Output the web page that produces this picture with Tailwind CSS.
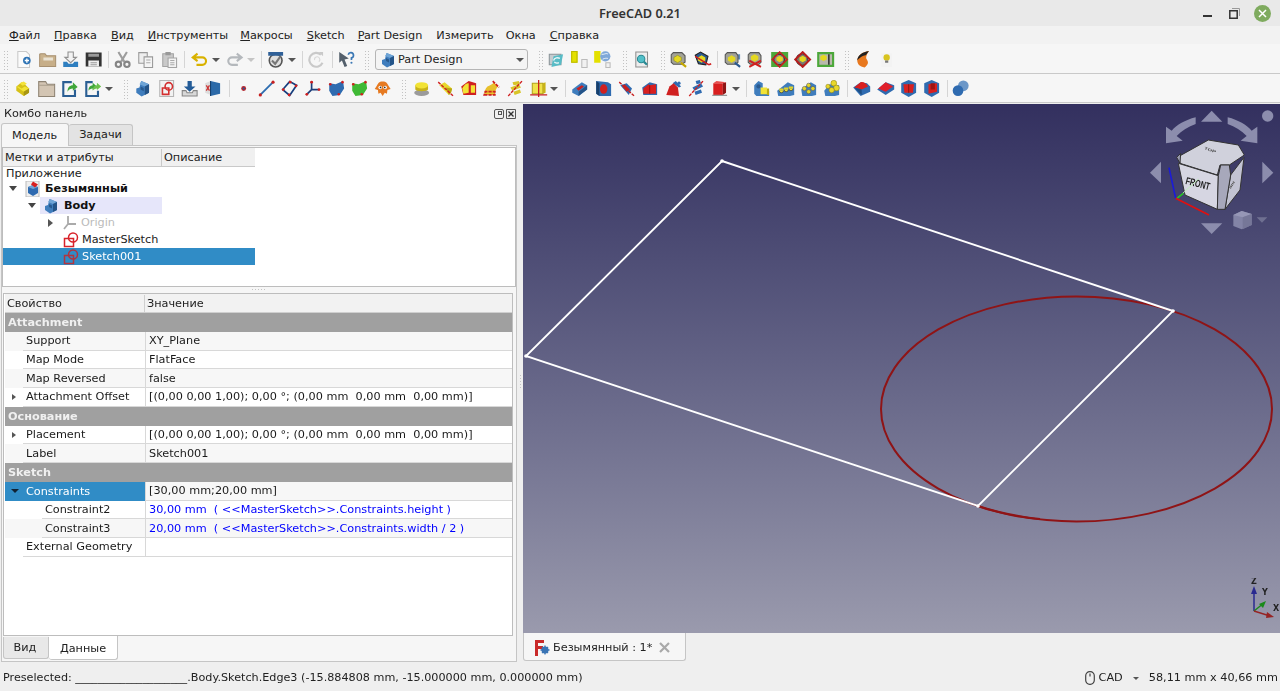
<!doctype html>
<html>
<head>
	<title>FreeCAD 0.21</title>
	<meta charset="UTF-8">
	<script src="https://cdn.jsdelivr.net/npm/@tailwindcss/browser@4"></script>
</head>

<body class="h-[691px] w-[1280px] overflow-hidden bg-[#efefef] font-['DejaVu_Sans',sans-serif] text-[11.25px] leading-none text-[#1a1a1a] blur-[0.3px]">

<!-- Icon set -->
<svg class="absolute size-0">
	<symbol id="new" viewBox="0 0 16 16"><path d="M2.5.5h8l3 3v12h-11z" fill="#fbfbfb" stroke="#c9c9c9"/><circle cx="11" cy="9" r="3.6" fill="#2f74b5"/><path d="M9 9h4M11 7v4" stroke="#fff" stroke-width="1.3"/></symbol>
	<symbol id="open" viewBox="0 0 16 16"><path d="M.5 3V14.500H15.500V4.500H7L5.500 2.500H1.500z" fill="#c9b28d" stroke="#a89070"/><path d="M4 6h9v4H4z" fill="#e9e2d3"/><path d="M1 9h14v5H1z" fill="#c7ae88"/></symbol>
	<symbol id="folder" viewBox="0 0 16 16"><path d="M.5 1.500H7L8.500 4H15.500V15.500H.500z" fill="#d3c5b3" stroke="#8f8474"/><path d="M1 5h14" stroke="#a99c8b"/></symbol>
	<symbol id="import" viewBox="0 0 16 16"><path d="M5.500 1h5v5h3L8 11 2.500 6h3z" fill="#f2f2f2" stroke="#8f8f8f"/><path d="M1 10h3.500l1.500 2h4l1.500-2H15v5H1z" fill="#2f7fc0"/></symbol>
	<symbol id="tray" viewBox="0 0 16 16"><path d="M1 10h3.500l1 2h5l1-2H15v5H1z" fill="#d8d8d8" stroke="#858585"/><path d="M6 1h4v5h3.500L8 11 2.500 6H6z" fill="#245c98"/></symbol>
	<symbol id="save" viewBox="0 0 16 16"><path d="M.5 1.500h15v13H.5z" fill="#333"/><path d="M3 2.500h10v3H3z" fill="#9a9a9a"/><path d="M3 9h10v5.500H3z" fill="#eee"/><path d="M5 11h6M5 13h6" stroke="#999"/></symbol>
	<symbol id="cut" viewBox="0 0 16 16"><path d="M4 1l5.500 9M12 1L6.500 10" stroke="#9d9d9d" stroke-width="2"/><circle cx="4" cy="12.500" r="2.500" fill="none" stroke="#858585" stroke-width="2"/><circle cx="12" cy="12.500" r="2.500" fill="none" stroke="#858585" stroke-width="2"/></symbol>
	<symbol id="copy" viewBox="0 0 16 16"><path d="M1.500 1.500h8v10h-8z" fill="#eee" stroke="#999"/><path d="M6.500 5.500h8v10h-8z" fill="#f4f4f4" stroke="#999"/><path d="M8.500 8.500h4M8.500 11h4" stroke="#aaa"/></symbol>
	<symbol id="paste" viewBox="0 0 16 16"><path d="M1.500 2.500h10v12h-10z" fill="#c9c9c9" stroke="#a3a3a3"/><path d="M4 1h5v3H4z" fill="#999"/><path d="M6.500 6.500h8v9h-8z" fill="#f2f2f2" stroke="#a3a3a3"/><path d="M8.500 9h4M8.500 11h4M8.500 13h4" stroke="#aaa"/></symbol>
	<symbol id="undo" viewBox="0 0 16 16"><path d="M6 2.500L1.500 6 6 9.500M2 6h8.500a3 3 0 0 1 0 7H5" fill="none" stroke="#d9b200" stroke-width="2"/></symbol>
	<symbol id="redo" viewBox="0 0 16 16"><path d="M10 2.500L14.500 6 10 9.500M14 6H5.500a3 3 0 0 0 0 7H11" fill="none" stroke="#b4b8bc" stroke-width="2"/></symbol>
	<symbol id="macro" viewBox="0 0 16 16"><circle cx="8" cy="9" r="6" fill="#dfdfdf" stroke="#555" stroke-width="1.500"/><path d="M1 1h14v3.500H1z" fill="#2f6098"/><path d="M4.500 9l3 3 5-7" fill="none" stroke="#777" stroke-width="2"/></symbol>
	<symbol id="refresh" viewBox="0 0 16 16"><path d="M13.500 11A6.500 6.500 0 1 1 12 3.500" fill="none" stroke="#c9c9c9" stroke-width="2"/><path d="M6 8.500a2.500 2.500 0 1 1 4 1.500" fill="none" stroke="#d9d9d9"/><path d="M10 1l4 0 0 4z" fill="#c9c9c9"/></symbol>
	<symbol id="what" viewBox="0 0 16 16"><path d="M1 1l9 6-4 1 2.500 6-2.500 1-2.500-6L1 11z" fill="#54606c"/><path d="M9.500 3.500a2.500 2.500 0 1 1 3 3v2" fill="none" stroke="#3b78b5" stroke-width="1.600"/><circle cx="12.500" cy="11" r="1" fill="#3b78b5"/></symbol>
	<symbol id="pdbody" viewBox="0 0 16 16"><path d="M6.500 1L14 4v8l-7 3.500L2 12V8l3-1z" fill="#3f7dbd"/><path d="M7 1l7 3-4 2-5-2z" fill="#6ea4d6"/><path d="M6 6l3 1.500v3L6 9z" fill="#27598e"/><path d="M10 6l4-2v8l-4 2z" fill="#245488"/></symbol>
	<symbol id="sketch" viewBox="0 0 16 16"><path d="M1.500.5h13v15h-13z" fill="#f2f2f2" stroke="#b5b5b5"/><circle cx="10" cy="6" r="3.500" fill="none" stroke="#d32f2f" stroke-width="1.500"/><path d="M4 7.500h6v6H4z" fill="none" stroke="#d32f2f" stroke-width="1.500"/></symbol>
	<symbol id="sk2" viewBox="0 0 16 16"><circle cx="10" cy="5.500" r="4.500" fill="none" stroke="currentColor" stroke-width="1.500"/><path d="M1.500 6.500h9v8h-9z" fill="none" stroke="currentColor" stroke-width="1.500"/></symbol>
	<symbol id="map" viewBox="0 0 16 16"><path d="M1 3l5-2v13l-5-2z" fill="#dcdcdc"/><path d="M6 1l9 2v10l-9 2z" fill="#2c6aa8"/><path d="M6 1v14" stroke="#173f6b"/><path d="M2 5l3 5M5 5l-3 5" stroke="#c33" stroke-width="1.200"/></symbol>
	<symbol id="point" viewBox="0 0 16 16"><circle cx="8" cy="8" r="2.300" fill="#b3262e"/><circle cx="8" cy="8" r="1" fill="#2558a0"/></symbol>
	<symbol id="line" viewBox="0 0 16 16"><path d="M2 14L14 2" stroke="#2d6db0" stroke-width="1.700"/><circle cx="2" cy="14" r="1.500" fill="#c82020"/><circle cx="14" cy="2" r="1.500" fill="#c82020"/></symbol>
	<symbol id="plane" viewBox="0 0 16 16"><path d="M8 1.500L14.500 5 8 14.500 1.500 9z" fill="none" stroke="#153e7e" stroke-width="1.600"/><g fill="#d21f1f"><circle cx="8.500" cy="2" r="1.300"/><circle cx="14" cy="5.500" r="1.300"/><circle cx="7.500" cy="14" r="1.300"/><circle cx="2" cy="9" r="1.300"/></g></symbol>
	<symbol id="axes" viewBox="0 0 16 16"><path d="M7 1v8M7 9l-5 5M7 9h7" stroke="#1e3f7a" stroke-width="1.600"/><g fill="#d21f1f"><circle cx="7" cy="2" r="1.300"/><circle cx="2.500" cy="13.500" r="1.300"/><circle cx="14" cy="9" r="1.300"/></g></symbol>
	<symbol id="binder" viewBox="0 0 16 16"><path d="M1 3l6 1 7-3 1 7-4 6-7 1-3-5z" fill="#2f6bb0"/><g fill="#d21f1f"><circle cx="2" cy="4" r="1.200"/><circle cx="13.500" cy="2" r="1.200"/><circle cx="10" cy="13.500" r="1.200"/></g></symbol>
	<symbol id="binderg" viewBox="0 0 16 16"><path d="M1 3l6 1 7-3 1 7-4 6-7 1-3-5z" fill="#3fb935"/><g fill="#d21f1f"><circle cx="2" cy="4" r="1.200"/><circle cx="13.500" cy="2" r="1.200"/><circle cx="10" cy="13.500" r="1.200"/></g></symbol>
	<symbol id="clone" viewBox="0 0 16 16"><path d="M8 1.500c3.500 0 4.500 2 5.500 4l2 3-3 1-.5 3.500-2-1-2 3-2-3-2 1-.5-3.500-3-1 2-3c1-2 2-4 5.500-4z" fill="#e67a22"/><circle cx="5.700" cy="7" r="1.700" fill="#fff"/><circle cx="10.300" cy="7" r="1.700" fill="#fff"/><circle cx="6" cy="7" r=".8" fill="#333"/><circle cx="10" cy="7" r=".8" fill="#333"/></symbol>
	<symbol id="part" viewBox="0 0 16 16"><path d="M2 6l5-4 3 2 4 4v4l-5 3-7-5z" fill="#d6c118"/><path d="M5 3l4-1.500 3 2-4 2z" fill="#f4e33a"/><path d="M2 6l7 5 5-3-4-2-3 2-3-2z" fill="#f2e335"/><path d="M9 11v4l5-3V8z" fill="#a89612"/></symbol>
	<symbol id="link1" viewBox="0 0 16 16"><path d="M10 2H2v13h11V9" fill="none" stroke="#2b5f94" stroke-width="2"/><path d="M6 11c0-4 2-6 5-6V2l4.500 4.500L11 10V8c-2 0-4 1-5 3z" fill="#3ea63a"/></symbol>
	<symbol id="link2" viewBox="0 0 16 16"><path d="M8 2H2v13h11V10" fill="none" stroke="#2b5f94" stroke-width="2"/><path d="M4 10c0-3 1.500-5 4-5V2.500L12 6 8 9.500V8c-2 0-3 1-4 2z" fill="#3ea63a"/><path d="M8 10c0-3 1.500-5 4-5V2.500L16 6l-4 3.500V8c-2 0-3 1-4 2z" fill="#6bc04b"/></symbol>
	<symbol id="sync" viewBox="0 0 16 16"><path d="M2 3h11v10H2z" fill="#c6ccd0" stroke="#8a9498"/><path d="M6 5l9-2-2 10-9 2z" fill="#58bcc6"/><path d="M6 9c1-3 4-3 6-2M11 11c-2 1-4 0-4-1" fill="none" stroke="#e8f6f8" stroke-width="1.300"/></symbol>
	<symbol id="ypage" viewBox="0 0 16 16"><path d="M0 0h6v11H0z" fill="#e4e000"/><path d="M.5.500h5v10h-5z" fill="none" stroke="#bbb800"/><path d="M10 8h5v7.500h-5z" fill="#f1f1f1" stroke="#bbb"/></symbol>
	<symbol id="yglobe" viewBox="0 0 16 16"><path d="M0 0h6v11H0z" fill="#e4e000"/><circle cx="10.500" cy="5" r="4.800" fill="#7fa8d8"/><path d="M7 3c2 1 4-2 6 0M8 8c1-2 4-1 5-1" stroke="#d8e6f4" fill="none"/><path d="M11 11h4v4.500h-4z" fill="#f1f1f1" stroke="#bbb"/></symbol>
	<symbol id="zoomdoc" viewBox="0 0 16 16"><path d="M2.500 1h11v14h-11z" fill="#ededed" stroke="#8f8f8f"/><circle cx="7.500" cy="7.500" r="3.500" fill="#52bfc8" stroke="#2a8a94"/><path d="M10 10l3 3" stroke="#2a8a94" stroke-width="2"/></symbol>
	<symbol id="ma" viewBox="0 0 16 16"><path d="M3 1.500h8l3 3v6l-3 2H3l-2-2v-7z" fill="#a3a397" stroke="#555"/><path d="M3.500 6L7 4l3.500 2v3L7 11 3.500 9z" fill="#e4d820" stroke="#8c8410" stroke-width=".5"/><path d="M10 11l5 4" stroke="#c4a800" stroke-width="2"/></symbol>
	<symbol id="mb" viewBox="0 0 16 16"><path d="M1 4l5-3 7 4-2 8-7-1z" fill="#2a5a90" stroke="#222"/><path d="M3.500 6L7 4l3.500 2v3L7 11 3.500 9z" fill="#e4d820"/><path d="M1 5l13 8M14 13l2-1" stroke="#d02020" stroke-width="1.500"/></symbol>
	<symbol id="mc" viewBox="0 0 16 16"><path d="M1 3h14v5H1z" fill="#5f8dbb"/><path d="M3 1.500h8l2 3v6l-2 2H3l-2-2v-7z" fill="#a3a397" stroke="#555"/><path d="M3.500 6L7 4l3.500 2v3L7 11 3.500 9z" fill="#e4d820"/><path d="M10 11l5 4" stroke="#2a5a90" stroke-width="2"/></symbol>
	<symbol id="md" viewBox="0 0 16 16"><path d="M3 1.500h8l2 3v6l-2 2H3l-2-2v-7z" fill="#a3a397" stroke="#555"/><path d="M3.500 5L7 3l3.500 2v3L7 10 3.500 8z" fill="#e4d820"/><path d="M2 9l11 6M13 9L2 15" stroke="#d02020" stroke-width="1.800"/></symbol>
	<symbol id="me" viewBox="0 0 16 16"><path d="M0 1h16v14H0z" fill="#4ca83a"/><circle cx="7.500" cy="8" r="5" fill="#888" stroke="#333"/><path d="M5 6l3-1.500L11 6v3L8 10.500 5 9z" fill="#e4d820"/><path d="M1 8l7-7 7 7-7 7z" fill="none" stroke="#c82020" stroke-width="1.500"/></symbol>
	<symbol id="mf" viewBox="0 0 16 16"><circle cx="7.500" cy="8" r="5.500" fill="#7a7a70" stroke="#333"/><path d="M5 6l3-1.500L11 6v3L8 10.500 5 9z" fill="#e4d820"/><path d="M1 8l7-7 7 7-7 7z" fill="none" stroke="#b81c1c" stroke-width="1.800"/></symbol>
	<symbol id="mg" viewBox="0 0 16 16"><path d="M0 1h16v14H0z" fill="#4ca83a"/><path d="M2 3h12v10H2z" fill="#b9b9ac"/><path d="M3 5l3-1.500L9 5v3L6 9.500 3 8z" fill="#e4d820"/><path d="M11 3v10" stroke="#333" stroke-width="1.500"/></symbol>
	<symbol id="orange" viewBox="1.500 0 13 16"><path d="M13 0C6 1 2 5 2 9c0 3 2 6 7 6.500C12 13 13 11 11 8 9.500 6 11 3 13 0z" fill="#e8781e"/><path d="M13 0C7 1 2 4 2 9c3-4 7-5 8-5z" fill="#222"/></symbol>
	<symbol id="bulb" viewBox="0 0 16 16"><path d="M3 2h10v13H3z" fill="#f3f3f3"/><circle cx="8" cy="6" r="3" fill="#d8c420"/><path d="M6.500 9h3v2h-3z" fill="#777"/></symbol>
	<symbol id="pad" viewBox="0 0 16 16"><ellipse cx="8" cy="12" rx="7" ry="3" fill="#9b9b9b"/><path d="M2 5v4c1 2 11 2 12 0V5z" fill="#c9b318"/><ellipse cx="8" cy="5" rx="6" ry="3" fill="#f2e335"/></symbol>
	<symbol id="rev" viewBox="0 0 16 16"><path d="M2 5l5-3 7 6-3 6z" fill="#e8d82c"/><path d="M14 8c0 3-2 6-3 6l-3-7z" fill="#b9a810"/><path d="M1 2l14 13" stroke="#d02020" stroke-width="1.300" stroke-dasharray="3 1"/></symbol>
	<symbol id="loft" viewBox="0 0 16 16"><path d="M1 6l7-5 7 2v11H3z" fill="#d02020"/><path d="M2 8c2-4 4-5 6-5v9l-5 1z" fill="#f2e335"/><path d="M10 5h4v7h-4z" fill="#f2e335"/></symbol>
	<symbol id="pipe" viewBox="0 0 16 16"><path d="M4 6c2-1 5-2 6-4l4 4c-2 2-3 5-3 8H1c0-3 1-6 3-8z" fill="#e8c02c"/><path d="M1 14h10V11H2zM9 1l6 6" stroke="#d02020" stroke-width="1.600" fill="none" stroke-dasharray="3 1"/></symbol>
	<symbol id="helix" viewBox="0 0 16 16"><path d="M3 7l8-3 2 3-8 3zM6 11l6-2 1 3-6 2zM5 2l6-1 1 3-6 1z" fill="#d8c428"/><path d="M1 15L14 1" stroke="#d02020" stroke-width="1.300" stroke-dasharray="3 1"/></symbol>
	<symbol id="ybox" viewBox="0 0 16 16"><path d="M2 3h10v10H2z" fill="#f0e24a" stroke="#b3a31a"/><path d="M12 3l2.500-1v10L12 13z" fill="#c9b318"/><path d="M8 0v16M0 14h16" stroke="#c62020" stroke-width="1.200"/></symbol>
	<symbol id="pocket" viewBox="0 0 16 16"><path d="M1 9l9-7 5 3v4l-8 6-6-3z" fill="#3f7dbd"/><path d="M5 8l5-3 2 1-5 4z" fill="#c82020"/><path d="M7 15V11l8-6v4z" fill="#245488"/></symbol>
	<symbol id="hole" viewBox="0 0 16 16"><path d="M1 1l11 1 3 2v11H4l-3-2z" fill="#2f6bb0"/><path d="M1 1l3 2v12l-3-2z" fill="#173f6b"/><ellipse cx="8" cy="8.500" rx="3.500" ry="4.500" fill="#d02020"/></symbol>
	<symbol id="groove" viewBox="0 0 16 16"><path d="M2 5l6-2 5 5-3 6z" fill="#2f6bb0"/><path d="M6 4l5 5-3 2-4-5z" fill="#c82020"/><path d="M1 2l14 13" stroke="#c82020" stroke-width="1.300" stroke-dasharray="3 1"/></symbol>
	<symbol id="sloft" viewBox="0 0 16 16"><path d="M1 7l7-5 7 2v10H2z" fill="#2f6bb0"/><path d="M2 8l5-4 1 1 6-1v9H2z" fill="#d81f1f"/><path d="M8 5v8" stroke="#a01010"/></symbol>
	<symbol id="spipe" viewBox="0 0 16 16"><path d="M7 3l3-2 5 5-2 1z" fill="#2f6bb0"/><path d="M1 14l3-8 4-3 4 4 1 8z" fill="#d02020"/><circle cx="13" cy="3" r="1.500" fill="#2f6bb0"/></symbol>
	<symbol id="shelix" viewBox="0 0 16 16"><path d="M4 7l8-4 2 3-8 4zM6 11l6-2 1 3-6 2z" fill="#2f6bb0"/><path d="M7 1l4-1 1 3-4 1z" fill="#2f6bb0"/><path d="M1 15L14 1" stroke="#d02020" stroke-width="1.300" stroke-dasharray="3 1"/></symbol>
	<symbol id="rbox" viewBox="0 0 16 16"><path d="M2 3h9v11H2z" fill="#d81f1f"/><path d="M11 3l3-1v10l-3 2z" fill="#8e1515"/><path d="M5 1l9 1-3 1H2z" fill="#e85050"/><path d="M1 14.500h14" stroke="#999" stroke-width="1.300"/></symbol>
	<symbol id="mirror" viewBox="0 0 16 16"><path d="M1 5l4-4 4 2v5l6 2v5H3l-2-2z" fill="#3f7dbd"/><circle cx="5" cy="6" r="2" fill="#2a5a90"/><path d="M7 7h6v6.500H7z" fill="#f2e335"/><path d="M14 8v6" stroke="#b9a810" stroke-width="2"/></symbol>
	<symbol id="linear" viewBox="0 0 16 16"><path d="M0 10l10-8 6 3v9l-4 1H1z" fill="#3f7dbd"/><path d="M2 10a2 2 0 0 0 4 0M6.500 9a2 2 0 0 0 4 0M11 8a2 2 0 0 0 4 0" fill="#f2e335" stroke="#333" stroke-width=".6"/><path d="M2 8h4v2H2zM6.500 7h4v2h-4zM11 6h4v2h-4z" fill="#e4d428"/></symbol>
	<symbol id="polar" viewBox="0 0 16 16"><path d="M1 9l9-7 5 3v9l-4 1H2z" fill="#3f7dbd"/><g fill="#e4d428" stroke="#555" stroke-width=".5"><circle cx="8" cy="5" r="2"/><circle cx="4" cy="8" r="2"/><circle cx="12" cy="8" r="2"/><circle cx="8" cy="11" r="2"/></g></symbol>
	<symbol id="multi" viewBox="0 0 16 16"><path d="M1 10l5-6 9 1v9l-4 1H2z" fill="#3f7dbd"/><g fill="#e8d82c" stroke="#8c7f10" stroke-width=".5"><circle cx="10" cy="3" r="2.700"/><circle cx="4.500" cy="6" r="2"/><circle cx="12.500" cy="7.500" r="2.700"/><circle cx="8" cy="9.500" r="2.500"/></g></symbol>
	<symbol id="fillet" viewBox="0 0 16 16"><path d="M0 7l7-5 6 1 3 3v5l-9 4z" fill="#2f6bb0"/><path d="M1 7l6-5c3-.5 5 1 7 4l-6 3z" fill="#d81f1f"/><path d="M1 7l7 2v5z" fill="#1d4f85"/></symbol>
	<symbol id="chamfer" viewBox="0 0 16 16"><path d="M0 9l8-7 8 3v4l-8 5z" fill="#2f6bb0"/><path d="M1 8l7-6 7 4-7 5z" fill="#e01f2a"/></symbol>
	<symbol id="draft" viewBox="0 0 16 16"><path d="M8 0l7 3v9l-7 4-7-4V3z" fill="#2f6bb0"/><path d="M3 4h10l-1 8H4z" fill="#d81f1f"/><path d="M8 4v8" stroke="#8e1515"/></symbol>
	<symbol id="thick" viewBox="0 0 16 16"><path d="M8 0l7 3v9l-7 4-7-4V3z" fill="#2f6bb0"/><path d="M5 4l8-1v8l-8 2z" fill="#d81f1f"/><path d="M7 3l4 0v6H7z" fill="#9d1414"/></symbol>
	<symbol id="bool" viewBox="0 0 16 16"><circle cx="10.500" cy="5.500" r="5" fill="#6b97c8"/><circle cx="5.500" cy="10" r="5" fill="#2f6bb0"/></symbol>
	<symbol id="pdoc" viewBox="0 0 16 16"><path d="M1 0h13v16H1z" fill="#eee" stroke="#bbb"/><path d="M8 4l5 2v6l-5 3-5-3V6z" fill="#2f6bb0"/><path d="M3 6l5 2 5-2-5-2z" fill="#6ea4d6"/><path d="M8 .500l5 3-3 3-4-3z" fill="#d81f1f"/></symbol>
	<symbol id="fc" viewBox="0 0 16 16"><path d="M1 0h9v3H4v3h5v3H4v7H1z" fill="#c92a2a"/><circle cx="11" cy="10" r="3.500" fill="#3a74b5"/><circle cx="11" cy="10" r="1.300" fill="#eee"/><path d="M11 5.500v9M6.500 10h9M8 7l6 6M14 7l-6 6" stroke="#3a74b5" stroke-width="1.300"/></symbol>
</svg>

<!-- Title bar -->
<div class="flex h-[26px] items-center bg-[#e9e9e9]">
	<span class="ml-[599px] font-['Noto_Sans',sans-serif] text-[12.75px] font-semibold text-[#333]">FreeCAD 0.21</span>
	<div class="ml-[522px] mt-[5px] h-[2px] w-[9px] bg-[#333]"></div>
	<svg class="ml-[17px] size-[11px]" viewBox="0 0 11 11"><path d="M3 .5h7.500V8" fill="none" stroke="#999"/><path d="M.8 2.800h7.400v7.400H.8z" fill="none" stroke="#333" stroke-width="1.500"/></svg>
	<div class="ml-[14px] flex size-[17px] items-center justify-center rounded-full bg-[#7fab5f]">
		<svg class="size-[9px]" viewBox="0 0 9 9"><path d="M1 1l7 7M8 1L1 8" stroke="#fff" stroke-width="1.500"/></svg>
	</div>
</div>

<!-- Menu -->
<div class="flex h-[18px] items-center bg-[#f2f2f2] pl-[9px] pt-px text-[#222]">
	<span><u>Ф</u>айл</span><span class="ml-[14px]"><u>П</u>равка</span><span class="ml-[14px]"><u>В</u>ид</span><span class="ml-[14px]"><u>И</u>нструменты</span><span class="ml-[12px]"><u>М</u>акросы</span><span class="ml-[14px]"><u>S</u>ketch</span><span class="ml-[13px]"><u>P</u>art Design</span><span class="ml-[14px]">Измерить</span><span class="ml-[12px]">Окна</span><span class="ml-[14px]"><u>С</u>правка</span>
</div>

<!-- Toolbar 1 -->
<div class="flex h-[30px] items-center border-b border-[#c9c9c9] bg-[#f6f6f6] pt-[2px]">
	<div class="ml-[3px] h-[20px] w-[6px] bg-[radial-gradient(#c2c2c2_1px,transparent_1px)] bg-[length:3px_3px]"></div>
	<svg class="ml-[3.33px] h-[17px] w-[23.33px] shrink-0"><use href="#new"/></svg>
	<svg class="h-[17px] w-[23.33px] shrink-0"><use href="#open"/></svg>
	<svg class="h-[17px] w-[23.33px] shrink-0"><use href="#import"/></svg>
	<svg class="h-[17px] w-[23.33px] shrink-0"><use href="#save"/></svg>
	<div class="ml-[2.33px] h-[17px] w-px bg-[#d5d5d5]"></div>
	<svg class="ml-[2px] h-[17px] w-[23.33px] shrink-0"><use href="#cut"/></svg>
	<svg class="h-[17px] w-[23.33px] shrink-0"><use href="#copy"/></svg>
	<svg class="h-[17px] w-[23.33px] shrink-0"><use href="#paste"/></svg>
	<div class="ml-[3.5px] h-[17px] w-px bg-[#d5d5d5]"></div>
	<svg class="ml-[2.8px] h-[17px] w-[23.33px] shrink-0"><use href="#undo"/></svg>
	<div class="flex w-[11.7px] justify-start"><div class="border-x-[4px] border-t-[4px] border-x-transparent border-t-[#555]"></div></div>
	<svg class="h-[17px] w-[23.33px] shrink-0"><use href="#redo"/></svg>
	<div class="flex w-[11.7px] justify-start"><div class="border-x-[4px] border-t-[4px] border-x-transparent border-t-[#c5c5c5]"></div></div>
	<div class="ml-[2.7px] h-[17px] w-px bg-[#d5d5d5]"></div>
	<svg class="ml-[2.5px] h-[17px] w-[23.33px] shrink-0"><use href="#macro"/></svg>
	<div class="flex w-[11.2px] justify-start"><div class="border-x-[4px] border-t-[4px] border-x-transparent border-t-[#555]"></div></div>
	<div class="ml-[3px] h-[17px] w-px bg-[#d5d5d5]"></div>
	<svg class="ml-[2.3px] h-[17px] w-[23.33px] shrink-0"><use href="#refresh"/></svg>
	<div class="ml-[3.4px] h-[17px] w-px bg-[#d5d5d5]"></div>
	<svg class="ml-[2.3px] h-[17px] w-[23.33px] shrink-0"><use href="#what"/></svg>
	<div class="ml-[5.4px] h-[20px] w-[6px] bg-[radial-gradient(#c2c2c2_1px,transparent_1px)] bg-[length:3px_3px]"></div>
	<div class="ml-[5px] flex h-[21px] w-[153px] shrink-0 items-center rounded-[3px] border border-[#b5b5b5] bg-[#f4f4f4] pl-[4px] text-[#222]">
		<svg class="mr-[2px] h-4 w-4"><use href="#pdbody"/></svg>
		<span class="pt-px">Part Design</span>
		<div class="ml-auto mr-[3px] border-x-[4px] border-t-[4px] border-x-transparent border-t-[#555]"></div>
	</div>
	<div class="ml-[10px] h-[20px] w-[6px] bg-[radial-gradient(#c2c2c2_1px,transparent_1px)] bg-[length:3px_3px]"></div>
	<svg class="ml-[.3px] h-[17px] w-[23.33px] shrink-0"><use href="#sync"/></svg>
	<svg class="h-[17px] w-[23.33px] shrink-0"><use href="#ypage"/></svg>
	<svg class="h-[17px] w-[23.33px] shrink-0"><use href="#yglobe"/></svg>
	<div class="ml-[7.7px] h-[20px] w-[6px] bg-[radial-gradient(#c2c2c2_1px,transparent_1px)] bg-[length:3px_3px]"></div>
	<svg class="ml-[2.3px] h-[17px] w-[23.33px] shrink-0"><use href="#zoomdoc"/></svg>
	<div class="ml-[6.4px] h-[20px] w-[6px] bg-[radial-gradient(#c2c2c2_1px,transparent_1px)] bg-[length:3px_3px]"></div>
	<svg class="ml-[1.3px] h-[17px] w-[23.33px] shrink-0"><use href="#ma"/></svg>
	<svg class="h-[17px] w-[23.33px] shrink-0"><use href="#mb"/></svg>
	<div class="ml-[3.5px] h-[17px] w-px bg-[#d5d5d5]"></div>
	<svg class="ml-[2.5px] h-[17px] w-[23.33px] shrink-0"><use href="#mc"/></svg>
	<svg class="h-[17px] w-[23.33px] shrink-0"><use href="#md"/></svg>
	<svg class="h-[17px] w-[23.33px] shrink-0"><use href="#me"/></svg>
	<svg class="h-[17px] w-[23.33px] shrink-0"><use href="#mf"/></svg>
	<svg class="h-[17px] w-[23.33px] shrink-0"><use href="#mg"/></svg>
	<div class="ml-[6.4px] h-[20px] w-[6px] bg-[radial-gradient(#c2c2c2_1px,transparent_1px)] bg-[length:3px_3px]"></div>
	<svg class="ml-[2px] h-[17px] w-[23.33px] shrink-0"><use href="#orange"/></svg>
	<svg class="h-[17px] w-[23.33px] shrink-0"><use href="#bulb"/></svg>
</div>

<!-- Toolbar 2 -->
<div class="flex h-[29px] items-center border-b border-[#c9c9c9] bg-[#f6f6f6] pt-px">
	<div class="ml-[3px] h-[20px] w-[6px] bg-[radial-gradient(#c2c2c2_1px,transparent_1px)] bg-[length:3px_3px]"></div>
	<svg class="ml-[2.3px] h-[17px] w-[23.33px] shrink-0"><use href="#part"/></svg>
	<svg class="h-[17px] w-[23.33px] shrink-0"><use href="#folder"/></svg>
	<svg class="h-[17px] w-[23.33px] shrink-0"><use href="#link1"/></svg>
	<svg class="h-[17px] w-[23.33px] shrink-0"><use href="#link2"/></svg>
	<div class="flex w-[11.4px] justify-start"><div class="border-x-[4px] border-t-[4px] border-x-transparent border-t-[#555]"></div></div>
	<div class="ml-[7px] h-[20px] w-[6px] bg-[radial-gradient(#c2c2c2_1px,transparent_1px)] bg-[length:3px_3px]"></div>
	<svg class="ml-[2.3px] h-[17px] w-[23.33px] shrink-0"><use href="#pdbody"/></svg>
	<svg class="h-[17px] w-[23.33px] shrink-0"><use href="#sketch"/></svg>
	<svg class="h-[17px] w-[23.33px] shrink-0"><use href="#tray"/></svg>
	<svg class="h-[17px] w-[23.33px] shrink-0"><use href="#map"/></svg>
	<div class="ml-[3.9px] h-[17px] w-px bg-[#d5d5d5]"></div>
	<svg class="ml-[2px] h-[17px] w-[23.33px] shrink-0"><use href="#point"/></svg>
	<svg class="h-[17px] w-[23.33px] shrink-0"><use href="#line"/></svg>
	<svg class="h-[17px] w-[23.33px] shrink-0"><use href="#plane"/></svg>
	<svg class="h-[17px] w-[23.33px] shrink-0"><use href="#axes"/></svg>
	<svg class="h-[17px] w-[23.33px] shrink-0"><use href="#binder"/></svg>
	<svg class="h-[17px] w-[23.33px] shrink-0"><use href="#binderg"/></svg>
	<svg class="h-[17px] w-[23.33px] shrink-0"><use href="#clone"/></svg>
	<div class="ml-[6.2px] h-[20px] w-[6px] bg-[radial-gradient(#c2c2c2_1px,transparent_1px)] bg-[length:3px_3px]"></div>
	<svg class="ml-[3.3px] h-[17px] w-[23.33px] shrink-0"><use href="#pad"/></svg>
	<svg class="h-[17px] w-[23.33px] shrink-0"><use href="#rev"/></svg>
	<svg class="h-[17px] w-[23.33px] shrink-0"><use href="#loft"/></svg>
	<svg class="h-[17px] w-[23.33px] shrink-0"><use href="#pipe"/></svg>
	<svg class="h-[17px] w-[23.33px] shrink-0"><use href="#helix"/></svg>
	<svg class="h-[17px] w-[23.33px] shrink-0"><use href="#ybox"/></svg>
	<div class="flex w-[11.7px] justify-start"><div class="border-x-[4px] border-t-[4px] border-x-transparent border-t-[#555]"></div></div>
	<div class="ml-[3px] h-[17px] w-px bg-[#d5d5d5]"></div>
	<svg class="ml-[2.3px] h-[17px] w-[23.33px] shrink-0"><use href="#pocket"/></svg>
	<svg class="h-[17px] w-[23.33px] shrink-0"><use href="#hole"/></svg>
	<svg class="h-[17px] w-[23.33px] shrink-0"><use href="#groove"/></svg>
	<svg class="h-[17px] w-[23.33px] shrink-0"><use href="#sloft"/></svg>
	<svg class="h-[17px] w-[23.33px] shrink-0"><use href="#spipe"/></svg>
	<svg class="h-[17px] w-[23.33px] shrink-0"><use href="#shelix"/></svg>
	<svg class="h-[17px] w-[23.33px] shrink-0"><use href="#rbox"/></svg>
	<div class="flex w-[11.7px] justify-start"><div class="border-x-[4px] border-t-[4px] border-x-transparent border-t-[#555]"></div></div>
	<div class="ml-[3.2px] h-[17px] w-px bg-[#d5d5d5]"></div>
	<svg class="ml-[3px] h-[17px] w-[23.33px] shrink-0"><use href="#mirror"/></svg>
	<svg class="h-[17px] w-[23.33px] shrink-0"><use href="#linear"/></svg>
	<svg class="h-[17px] w-[23.33px] shrink-0"><use href="#polar"/></svg>
	<svg class="h-[17px] w-[23.33px] shrink-0"><use href="#multi"/></svg>
	<div class="ml-[3.7px] h-[17px] w-px bg-[#d5d5d5]"></div>
	<svg class="ml-[2px] h-[17px] w-[23.33px] shrink-0"><use href="#fillet"/></svg>
	<svg class="h-[17px] w-[23.33px] shrink-0"><use href="#chamfer"/></svg>
	<svg class="h-[17px] w-[23.33px] shrink-0"><use href="#draft"/></svg>
	<svg class="h-[17px] w-[23.33px] shrink-0"><use href="#thick"/></svg>
	<div class="ml-[3.7px] h-[17px] w-px bg-[#d5d5d5]"></div>
	<svg class="ml-px h-[17px] w-[23.33px] shrink-0"><use href="#bool"/></svg>
</div>

<!-- Main area -->
<div class="flex h-[558px]">

	<!-- Combo panel -->
	<div class="flex w-[518px] shrink-0 flex-col pl-px">
		<div class="flex h-[19px] shrink-0 items-center pl-[3px] pt-[2px] text-[#222]">
			Комбо панель
			<div class="ml-auto mr-[2px] flex gap-[2px]">
				<div class="size-[10px] rounded-[2px] border border-[#555]"><div class="ml-[3px] mt-[1px] size-[4px] border border-[#555]"></div></div>
				<svg class="size-[10px]" viewBox="0 0 10 10"><path d="M.5.5h9v9h-9z" fill="none" stroke="#555"/><path d="M2.500 2.500l5 5M7.500 2.500l-5 5" stroke="#333" stroke-width="1.300"/></svg>
			</div>
		</div>
		<div class="flex h-[23px] shrink-0 items-end">
			<div class="relative z-10 -mb-px flex h-[23px] w-[68px] items-center justify-center rounded-t-[3px] border border-b-0 border-[#c5c5c5] bg-[#f6f6f6] pr-px pt-[2px] text-[#222]">Модель</div>
			<div class="flex h-[21px] w-[64px] items-center justify-center rounded-t-[3px] border border-b-0 border-l-0 border-[#c5c5c5] bg-[#e3e3e3] text-[#222]">Задачи</div>
		</div>
		<div class="flex h-[517px] w-[516px] shrink-0 flex-col border border-[#c5c5c5] bg-[#f6f6f6] px-[1px] pt-[1px]">

			<!-- Tree -->
			<div class="-mx-px h-[140px] shrink-0 border border-[#bdbdbd] bg-white">
				<div class="flex h-[19px] w-[252px] border-b border-[#c9c9c9] bg-[#f0f0f0] pt-px text-[#222]">
					<div class="flex w-[159px] items-center border-r border-[#c9c9c9] pl-[2px]">Метки и атрибуты</div>
					<div class="flex items-center pl-[2px]">Описание</div>
				</div>
				<div class="flex h-[13px] items-center pl-[3px] text-[#222]">Приложение</div>
				<div class="flex h-[17px] items-center pl-[6px] font-bold text-[#111]">
					<div class="border-x-[4px] border-t-[5px] border-x-transparent border-t-[#444]"></div>
					<svg class="ml-[8px] mr-[4px] size-4"><use href="#pdoc"/></svg>Безымянный
				</div>
				<div class="flex h-[17px] items-center pl-[25px] font-bold text-[#111]">
					<div class="border-x-[4px] border-t-[5px] border-x-transparent border-t-[#444]"></div>
					<div class="ml-[4px] flex h-[17px] w-[122px] items-center bg-[#e6e6fa] pl-[3px]"><svg class="mr-[5px] size-4"><use href="#pdbody"/></svg>Body</div>
				</div>
				<div class="flex h-[17px] items-center pl-[45px] text-[#bbb]">
					<div class="border-y-[4px] border-l-[5px] border-y-transparent border-l-[#555]"></div>
					<svg class="ml-[9px] mr-[3px] size-4" viewBox="0 0 16 16"><path d="M6 1v8M6 9l-4 5M6 9h8" stroke="#aaa" stroke-width="1.800" fill="none"/></svg>Origin
				</div>
				<div class="flex h-[17px] items-center pl-[60px] text-[#222]">
					<svg class="mr-[3px] size-4 text-[#d8232a]"><use href="#sk2"/></svg>MasterSketch
				</div>
				<div class="ml-0 flex h-[17px] w-[252px] items-center bg-[#308cc6] pl-[60px] text-white">
					<svg class="mr-[3px] size-4 text-[#b3343f]"><use href="#sk2"/></svg>Sketch001
				</div>
			</div>

			<!-- Splitter -->
			<div class="flex h-[6px] shrink-0 justify-center">
				<div class="mt-[1px] h-[3px] w-[16px] bg-[radial-gradient(#c4c4c4_1px,transparent_1px)] bg-[length:3px_3px]"></div>
			</div>

			<!-- Property editor -->
			<div class="mr-[2px] h-[343px] shrink-0 border border-[#bdbdbd] bg-white pl-px">
				<div class="flex h-[19px] border-b border-[#cfcfcf] bg-[#f2f2f2] pt-px text-[#222]">
					<div class="flex w-[140px] items-center border-r border-[#cfcfcf] pl-[2px]">Свойство</div>
					<div class="flex items-center pl-[2px]">Значение</div>
				</div>
				<div class="flex h-[18.75px] items-center bg-[#a0a0a0] pl-[3px] font-bold text-[#f0f0f0]">Attachment</div>

				<div class="flex h-[18.75px] bg-[#f7f7f7]">
					<div class="w-[18px] shrink-0"></div>
					<div class="flex w-[122px] items-center border-b border-[#d8d8d8] pl-[3px]">Support</div>
					<div class="flex flex-1 items-center border-b border-l border-[#d8d8d8] pl-[3px]">XY_Plane</div>
				</div>
				<div class="flex h-[18.75px]">
					<div class="w-[18px] shrink-0"></div>
					<div class="flex w-[122px] items-center border-b border-[#d8d8d8] pl-[3px]">Map Mode</div>
					<div class="flex flex-1 items-center border-b border-l border-[#d8d8d8] pl-[3px]">FlatFace</div>
				</div>
				<div class="flex h-[18.75px] bg-[#f7f7f7]">
					<div class="w-[18px] shrink-0"></div>
					<div class="flex w-[122px] items-center border-b border-[#d8d8d8] pl-[3px]">Map Reversed</div>
					<div class="flex flex-1 items-center border-b border-l border-[#d8d8d8] pl-[3px]">false</div>
				</div>
				<div class="flex h-[18.75px]">
					<div class="flex w-[18px] shrink-0 items-center pl-[7px]"><div class="border-y-[3.5px] border-l-[4px] border-y-transparent border-l-[#555]"></div></div>
					<div class="flex w-[122px] items-center whitespace-nowrap border-b border-[#d8d8d8] pl-[3px]">Attachment Offset</div>
					<div class="flex flex-1 items-center whitespace-pre border-b border-l border-[#d8d8d8] pl-[3px]">[(0,00 0,00 1,00); 0,00 °; (0,00 mm  0,00 mm  0,00 mm)]</div>
				</div>

				<div class="flex h-[18.75px] items-center bg-[#a0a0a0] pl-[3px] font-bold text-[#f0f0f0]">Основание</div>
				<div class="flex h-[18.75px]">
					<div class="flex w-[18px] shrink-0 items-center pl-[7px]"><div class="border-y-[3.5px] border-l-[4px] border-y-transparent border-l-[#555]"></div></div>
					<div class="flex w-[122px] items-center border-b border-[#d8d8d8] pl-[3px]">Placement</div>
					<div class="flex flex-1 items-center whitespace-pre border-b border-l border-[#d8d8d8] pl-[3px]">[(0,00 0,00 1,00); 0,00 °; (0,00 mm  0,00 mm  0,00 mm)]</div>
				</div>
				<div class="flex h-[18.75px] bg-[#f7f7f7]">
					<div class="w-[18px] shrink-0"></div>
					<div class="flex w-[122px] items-center border-b border-[#d8d8d8] pl-[3px]">Label</div>
					<div class="flex flex-1 items-center border-b border-l border-[#d8d8d8] pl-[3px]">Sketch001</div>
				</div>

				<div class="flex h-[18.75px] items-center bg-[#a0a0a0] pl-[3px] font-bold text-[#f0f0f0]">Sketch</div>
				<div class="flex h-[18.75px] bg-[#f7f7f7]">
					<div class="flex w-[18px] shrink-0 items-center bg-[#308cc6] pl-[6px]"><div class="border-x-[4px] border-t-[4px] border-x-transparent border-t-[#123]"></div></div>
					<div class="flex w-[122px] items-center bg-[#308cc6] pl-[3px] text-white">Constraints</div>
					<div class="flex flex-1 items-center border-b border-l border-[#d8d8d8] pl-[3px]">[30,00 mm;20,00 mm]</div>
				</div>
				<div class="flex h-[18.75px]">
					<div class="w-[37px] shrink-0"></div>
					<div class="flex w-[103px] items-center border-b border-[#d8d8d8] pl-[3px]">Constraint2</div>
					<div class="flex flex-1 items-center whitespace-pre border-b border-l border-[#d8d8d8] pl-[3px] text-[#0000ff]">30,00 mm  ( &lt;&lt;MasterSketch&gt;&gt;.Constraints.height )</div>
				</div>
				<div class="flex h-[18.75px] bg-[#f7f7f7]">
					<div class="w-[37px] shrink-0"></div>
					<div class="flex w-[103px] items-center border-b border-[#d8d8d8] pl-[3px]">Constraint3</div>
					<div class="flex flex-1 items-center whitespace-pre border-b border-l border-[#d8d8d8] pl-[3px] text-[#0000ff]">20,00 mm  ( &lt;&lt;MasterSketch&gt;&gt;.Constraints.width / 2 )</div>
				</div>
				<div class="flex h-[18.75px]">
					<div class="w-[18px] shrink-0"></div>
					<div class="flex w-[122px] items-center whitespace-nowrap border-b border-[#d8d8d8] pl-[3px]">External Geometry</div>
					<div class="flex flex-1 items-center border-b border-l border-[#d8d8d8]"></div>
				</div>
			</div>

			<!-- Bottom tabs -->
			<div class="-mx-px flex h-[24px] shrink-0 items-start pl-px">
				<div class="mt-px flex h-[22px] w-[46px] items-center justify-center rounded-b-[3px] border border-t-0 border-[#c5c5c5] bg-[#e8e8e8] pr-[2px] pt-px text-[#222]">Вид</div>
				<div class="flex h-[24px] w-[69px] items-center justify-center rounded-b-[3px] border border-t-0 border-l-0 border-[#c5c5c5] bg-white pt-[2px] text-[#222]">Данные</div>
			</div>
		</div>
	</div>

	<!-- Dock splitter -->
	<div class="flex w-[5px] shrink-0 items-center justify-center">
		<div class="h-[16px] w-[3px] bg-[radial-gradient(#c4c4c4_1px,transparent_1px)] bg-[length:3px_3px]"></div>
	</div>

	<!-- 3D view -->
	<div class="flex min-w-0 flex-1 flex-col pt-px">
		<div class="relative h-[529px] shrink-0 bg-gradient-to-b from-[#33305f] to-[#9a9aad]">
			<svg class="absolute inset-0 h-[529px] w-[757px]" viewBox="523 104 757 529">
				<ellipse cx="1076.500" cy="409" rx="195.500" ry="112.500" fill="none" stroke="#8f1416" stroke-width="2"/>
				<path d="M722 161L1173 311L978 506L526 356Z" fill="none" stroke="#fff" stroke-width="1.900"/>
				<path d="M978 506A195.500 112.500 0 0 0 1040 519" fill="none" stroke="#8f1416" stroke-width="2"/>
				<circle cx="722" cy="161" r="1.800" fill="#fff"/><circle cx="1173" cy="311" r="1.800" fill="#fff"/><circle cx="978" cy="506" r="1.800" fill="#fff"/><circle cx="526" cy="356" r="1.800" fill="#fff"/>
			</svg>

			<!-- Navigation cube -->
			<svg class="absolute right-0 top-0 h-[136px] w-[150px]" viewBox="0 12 450 408">
				<g fill="#8c8dad">
					<path d="M245 32L213 65H277Z"/><path d="M213 370H277L245 402Z"/><path d="M60 218L93 185V250Z"/><path d="M430 218L397 185V250Z"/>
					<circle cx="413" cy="48" r="17"/>
					<path d="M197 52C165 60 140 75 125 92L108 80V130L158 122L140 108C155 92 175 80 197 72Z"/>
					<path d="M293 52C325 60 350 75 365 92L382 80V130L332 122L350 108C335 92 315 80 293 72Z"/>
				</g>
				<path d="M310 345L335 333L365 342V375L335 388L310 378Z" fill="#8384a6"/>
				<path d="M310 345L335 333L365 342L338 352Z" fill="#9697b6"/>
				<path d="M338 352L365 342V375L338 388Z" fill="#767798"/>
				<path d="M380 352H412L396 368Z" fill="#6f7091"/>
				<g stroke="#333" stroke-width="3" stroke-linejoin="round">
					<path d="M145 170L235 120L325 135L343 165L298 195L270 195L262 225L150 190Z" fill="#d0d1dc"/>
					<path d="M145 190L265 227L262 328L165 285Z" fill="#d6d6e2"/>
					<path d="M302 225L342 172L330 270L285 328Z" fill="#c2c3d2"/>
					<path d="M265 227L272 195L298 195L302 225L285 328L262 328Z" fill="#a7a8bb"/>
					<path d="M140 172L152 160L150 190Z" fill="#999ab0"/>
				</g>
				<text x="0" y="0" transform="translate(165 252) rotate(14) scale(.8 1.150)" font-family="Liberation Sans" font-weight="700" font-size="27" fill="#222">FRONT</text>
				<text x="0" y="0" transform="translate(222 147) rotate(20) scale(1 .6)" font-family="Liberation Sans" font-weight="700" font-size="18" fill="#444">TOP</text>
				<path d="M300 265L312 245" stroke="#555" stroke-width="6" stroke-dasharray="3 2"/>
				<path d="M142 295L205 237" stroke="#bff0bb" stroke-width="3"/>
				<path d="M140 296L160 280" stroke="#22c422" stroke-width="5"/>
				<path d="M137 295L117 203" stroke="#1b1bd8" stroke-width="5"/>
				<path d="M137 295L237 345" stroke="#e01010" stroke-width="5"/>
			</svg>

			<!-- Axis cross -->
			<svg class="absolute bottom-[15px] right-0 h-[40px] w-[34px]" viewBox="0 0 34 40">
				<path d="M8 33V12" stroke="#2a2a90" stroke-width="1.500"/><path d="M5 16L8 8L11 16Z" fill="#2a2a90"/>
				<path d="M8 33L18 25" stroke="#1a8a1a" stroke-width="1.500"/><path d="M13 26L20 23L17 30Z" fill="#1a8a1a"/>
				<path d="M8 33L24 38" stroke="#962424" stroke-width="1.500"/><path d="M21 34L28 39L20 40Z" fill="#962424"/>
				<text x="5" y="6" font-family="DejaVu Sans" font-size="8" font-weight="700" fill="#222">Z</text>
				<text x="16" y="17" font-family="DejaVu Sans" font-size="8" font-weight="700" fill="#222">Y</text>
				<text x="27" y="33" font-family="DejaVu Sans" font-size="8" font-weight="700" fill="#222">X</text>
			</svg>
		</div>
		<div class="flex h-[28px] w-[163px] items-center rounded-b-[3px] border border-t-0 border-[#c5c5c5] bg-[#f6f6f6] pl-[10px] pt-[2px] text-[#222]">
			<svg class="mr-[3px] size-4"><use href="#fc"/></svg>Безымянный : 1*
			<svg class="ml-[7px] size-[11px]" viewBox="0 0 11 11"><path d="M1 1l9 9M10 1l-9 9" stroke="#a9a9a9" stroke-width="2.200"/></svg>
		</div>
	</div>
</div>

<!-- Status bar -->
<div class="flex h-[30px] items-center pl-[3px] pt-[4px] text-[#222]">
	<span class="whitespace-pre text-[11.2px]">Preselected: ____________________.Body.Sketch.Edge3 (-15.884808 mm, -15.000000 mm, 0.000000 mm)</span>
	<svg class="ml-auto mr-[4px] h-[14px] w-[10px]" viewBox="0 0 10 14"><rect x=".7" y=".7" width="8.600" height="12.600" rx="4" fill="none" stroke="#444" stroke-width="1.200"/><path d="M5 2.500v3" stroke="#444" stroke-width="1.200"/></svg>
	<span>CAD</span>
	<div class="ml-[10px] mr-[10px] border-x-[3px] border-t-[3px] border-x-transparent border-t-[#555]"></div>
	<span class="mr-[2px]">58,11 mm x 40,66 mm</span>
</div>

</body>
</html>
